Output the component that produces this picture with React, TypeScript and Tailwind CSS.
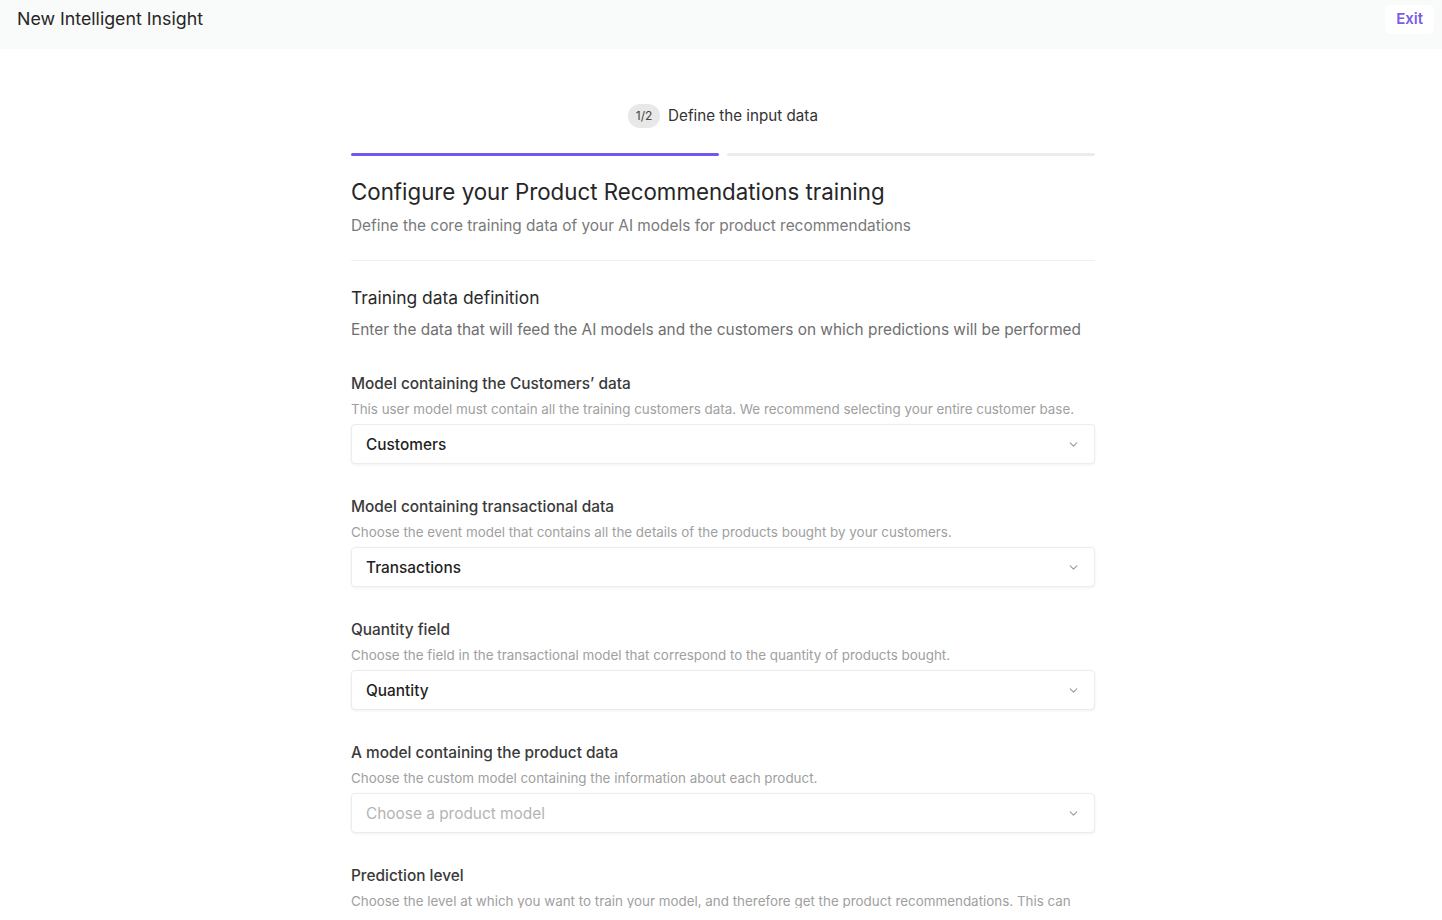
import { ChevronDown } from "lucide-react";

const fields = [
  {
    label: "Model containing the Customers’ data",
    help: "This user model must contain all the training customers data. We recommend selecting your entire customer base.",
    value: "Customers",
  },
  {
    label: "Model containing transactional data",
    help: "Choose the event model that contains all the details of the products bought by your customers.",
    value: "Transactions",
  },
  {
    label: "Quantity field",
    help: "Choose the field in the transactional model that correspond to the quantity of products bought.",
    value: "Quantity",
  },
  {
    label: "A model containing the product data",
    help: "Choose the custom model containing the information about each product.",
    value: "",
    placeholder: "Choose a product model",
  },
];

function Select({ value, placeholder }: { value: string; placeholder?: string }) {
  return (
    <div className="mt-[6px] flex h-[40px] items-center justify-between rounded-[4px] border border-[#ececec] bg-white px-[14px] shadow-[0_1px_3px_rgba(0,0,0,0.06)]">
      {value ? (
        <span className="text-[15.4px] font-medium text-[#1f1f1f]">{value}</span>
      ) : (
        <span className="text-[15.4px] text-[#b4b4b4]">{placeholder}</span>
      )}
      <ChevronDown size={13} strokeWidth={2} className="text-[#9a9a9a]" />
    </div>
  );
}

export default function App() {
  return (
    <div className="h-[920px] bg-white font-['Inter',sans-serif]">
      {/* visible page area, the frame ends a little above the window bottom */}
      <div className="h-[908px] overflow-hidden">
        <header className="flex h-[49px] items-start justify-between bg-[#f9fafa] pl-[17px] pr-[8px]">
          <h1 className="mt-[6px] text-[17.8px] text-[#262626]">New Intelligent Insight</h1>
          <button className="mt-[5px] h-[29px] rounded-[5px] bg-white px-[11px] text-[15px] font-semibold text-[#7a5ce8]">
            Exit
          </button>
        </header>

        <div className="pl-[4px]">
          <main className="mx-auto w-[744px] pt-[55px]">
            {/* stepper */}
            <div className="flex items-center justify-center gap-[8px]">
              <span className="flex h-[24px] w-[32px] items-center justify-center rounded-full bg-[#e8e8e8] text-[12px] text-[#444]">
                1/2
              </span>
              <span className="text-[15.2px] text-[#333]">Define the input data</span>
            </div>
            <div className="mt-[25px] flex gap-[8px]">
              <div className="h-[3px] flex-1 rounded-full bg-[#7357f0]" />
              <div className="h-[3px] flex-1 rounded-full bg-[#ececec]" />
            </div>

            <h2 className="mt-[21px] text-[22.3px] leading-[30px] text-[#262626]">
              Configure your Product Recommendations training
            </h2>
            <p className="mt-[7px] text-[15.4px] text-[#7a7a7a]">
              Define the core training data of your AI models for product recommendations
            </p>

            <div className="mt-[23px] h-px bg-[#f0f0f0]" />

            <h3 className="mt-[24px] text-[17.4px] text-[#2a2a2a]">Training data definition</h3>
            <p className="mt-[7px] text-[15.4px] text-[#6f6f6f]">
              Enter the data that will feed the AI models and the customers on which predictions will be performed
            </p>

            <div className="mt-[33px] flex flex-col gap-[33px]">
              {fields.map((f) => (
                <div key={f.label}>
                  <div className="text-[15.4px] font-medium leading-[20px] text-[#3a3a3a]">{f.label}</div>
                  <div className="mt-[6px] text-[13.4px] leading-[18px] text-[#a0a0a0]">{f.help}</div>
                  <Select value={f.value} placeholder={f.placeholder} />
                </div>
              ))}
              <div>
                <div className="text-[15.4px] font-medium leading-[20px] text-[#3a3a3a]">Prediction level</div>
                <div className="mt-[6px] pr-[16px] text-[13.4px] leading-[18px] text-[#a0a0a0]">
                  Choose the level at which you want to train your model, and therefore get the product recommendations.
                  This can be the product itself or a category of products.
                </div>
                <Select value="" placeholder="Choose a prediction level" />
              </div>
            </div>
          </main>
        </div>
      </div>
    </div>
  );
}
